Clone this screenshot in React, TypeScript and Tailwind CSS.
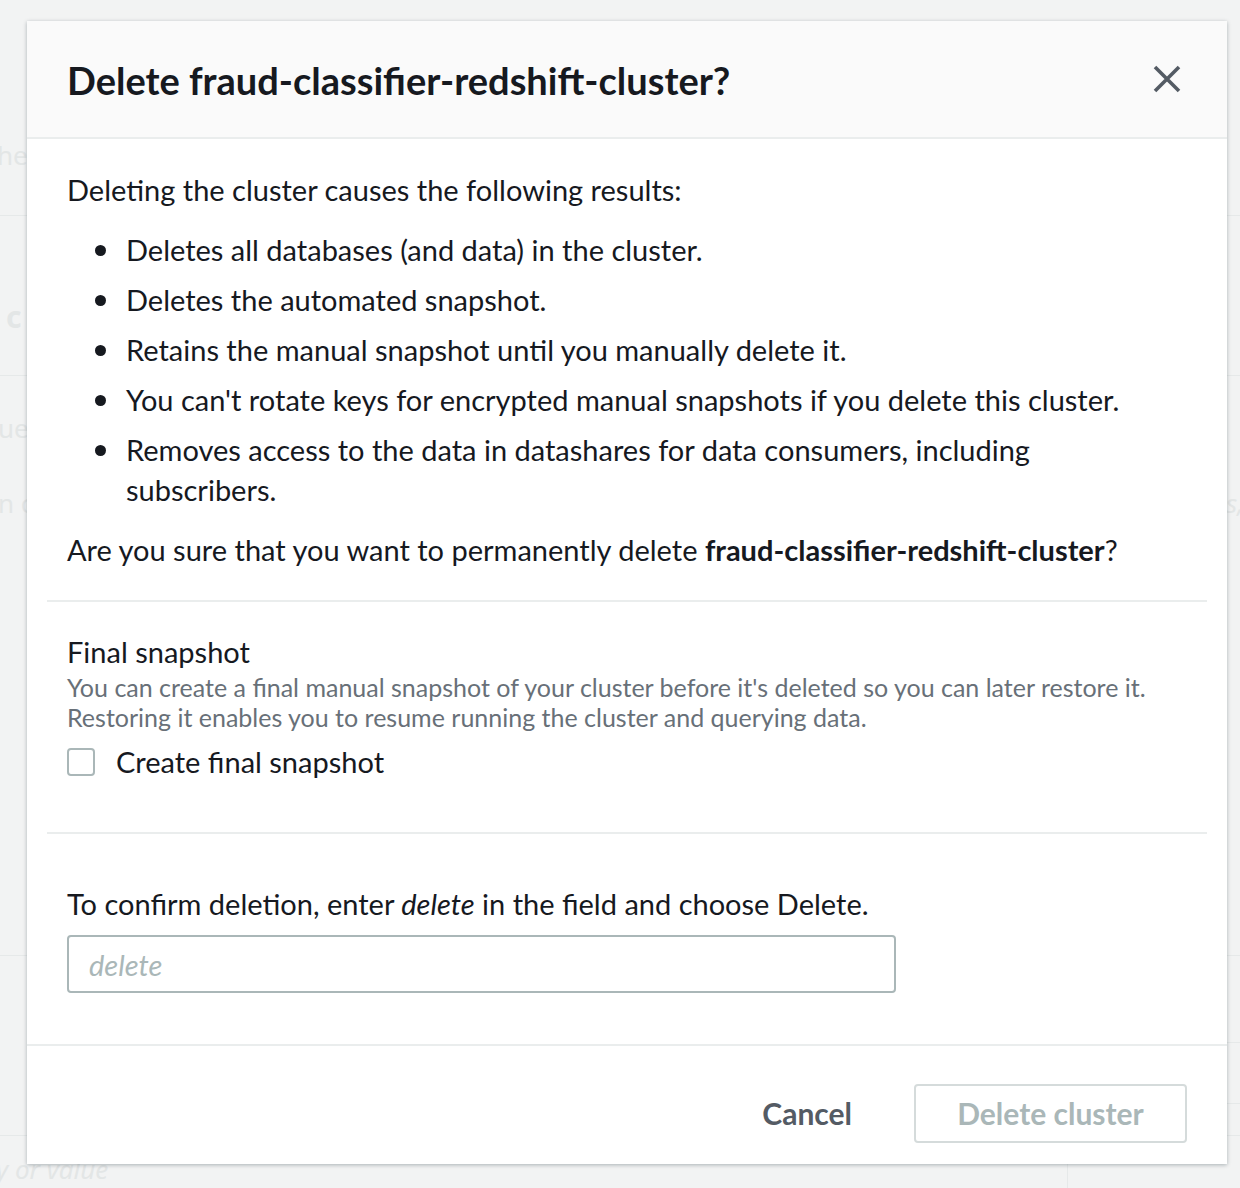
const font = { fontFamily: 'Lato, "Open Sans", sans-serif' }

function BackgroundPage() {
  return (
    <div className="h-[1188px] w-[1240px] overflow-hidden bg-[#f2f3f3] text-[26px] text-[#e3e6e6]">
      <div className="flex h-[216px] flex-col justify-end border-b border-[#e6e9e9] pb-[40px]">
        <span className="-ml-[3px]">he</span>
      </div>
      <div className="flex h-[160px] items-end border-b border-[#e6e9e9] pb-[36px]">
        <span className="ml-[6px] text-[30px] font-bold">c</span>
      </div>
      <div className="flex h-[72px] items-end">
        <span className="-ml-[2px]">ue</span>
      </div>
      <div className="flex h-[75px] items-end justify-between">
        <span className="-ml-[2px]">n c</span>
        <span className="mr-[-4px] italic">s,</span>
      </div>
      <div className="h-[433px] border-b border-[#e6e9e9]" />
      <div className="flex h-[180px] border-b border-[#e6e9e9]">
        <div className="flex-1" />
        <div className="mt-[86px] h-[62px] w-[173px] border-t border-b border-l border-[#e6e9e9]" />
      </div>
      <div className="flex">
        <div className="-ml-[4px] mt-[14px] w-[1071px] italic">y or value</div>
        <div className="h-[60px] border-l border-[#e6e9e9]" />
      </div>
    </div>
  )
}

function Bullet({ children }: { children: React.ReactNode }) {
  return (
    <li className="flex gap-[20px]">
      <span className="mt-[15px] ml-[28px] h-[11px] w-[11px] shrink-0 rounded-full bg-[#16191f]" />
      <span>{children}</span>
    </li>
  )
}

function CloseIcon() {
  return (
    <svg width="28" height="28" viewBox="0 0 28 28" className="text-[#545b64]">
      <path d="M2 2 L26 26 M26 2 L2 26" stroke="currentColor" strokeWidth="3.6" fill="none" />
    </svg>
  )
}

function DeleteModal() {
  return (
    <div className="absolute left-[27px] top-[21px] w-[1200px] bg-white shadow-[0_1px_4px_rgba(0,28,36,0.3)]" style={font}>
      {/* Header */}
      <div className="flex h-[118px] items-center justify-between border-b-2 border-[#eaeded] bg-[#fafafa] pl-[40px] pr-[46px]">
        <h2 className="pt-[3px] text-[38px] font-bold text-[#16191f]">Delete fraud-classifier-redshift-cluster?</h2>
        <CloseIcon />
      </div>

      {/* Body */}
      <div className="px-[20px]">
        <div className="px-[20px] pt-[31px] pb-[30px] text-[29px] leading-[40px] text-[#16191f]">
          <p>Deleting the cluster causes the following results:</p>
          <ul className="mt-[20px] flex flex-col gap-[10px]">
            <Bullet>Deletes all databases (and data) in the cluster.</Bullet>
            <Bullet>Deletes the automated snapshot.</Bullet>
            <Bullet>Retains the manual snapshot until you manually delete it.</Bullet>
            <Bullet>You can't rotate keys for encrypted manual snapshots if you delete this cluster.</Bullet>
            <Bullet>
              Removes access to the data in datashares for data consumers, including
              <br />
              subscribers.
            </Bullet>
          </ul>
          <p className="mt-[20px]">
            Are you sure that you want to permanently delete <b>fraud-classifier-redshift-cluster</b>?
          </p>
        </div>

        <div className="border-t-2 border-[#eaeded] px-[20px] pt-[30px] pb-[50px]">
          <div className="text-[29px] leading-[40px] text-[#16191f]">Final snapshot</div>
          <p className="text-[25px] leading-[30px] text-[#687078]">
            You can create a final manual snapshot of your cluster before it's deleted so you can later restore it.
            <br />
            Restoring it enables you to resume running the cluster and querying data.
          </p>
          <label className="mt-[10px] flex items-center gap-[21px] text-[29px] leading-[40px] text-[#16191f]">
            <span className="h-[28px] w-[28px] rounded-[4px] border-2 border-[#aab7b8] bg-white" />
            Create final snapshot
          </label>
        </div>

        <div className="border-t-2 border-[#eaeded] px-[20px] pt-[50px] pb-[51px]">
          <p className="text-[29px] leading-[40px] text-[#16191f]">
            To confirm deletion, enter <i>delete</i> in the field and choose Delete.
          </p>
          <input
            className="mt-[11px] h-[58px] w-[829px] rounded-[4px] border-2 border-[#aab7b8] px-[20px] text-[29px] italic outline-none placeholder:text-[#aab7b8]"
            placeholder="delete"
            style={font}
          />
        </div>
      </div>

      {/* Footer */}
      <div className="flex items-center justify-end gap-[30px] border-t-2 border-[#eaeded] pt-[38px] pb-[21px] pr-[40px]">
        <button className="px-[32px] text-[30px] font-bold text-[#545b64]" style={font}>Cancel</button>
        <button
          className="h-[59px] w-[273px] rounded-[4px] border-2 border-[#d5dbdb] bg-white text-[30px] font-bold text-[#aab7b8]"
          style={font}
        >
          Delete cluster
        </button>
      </div>
    </div>
  )
}

export default function App() {
  return (
    <div className="relative h-[1188px] w-[1240px] overflow-hidden">
      <BackgroundPage />
      <DeleteModal />
    </div>
  )
}
